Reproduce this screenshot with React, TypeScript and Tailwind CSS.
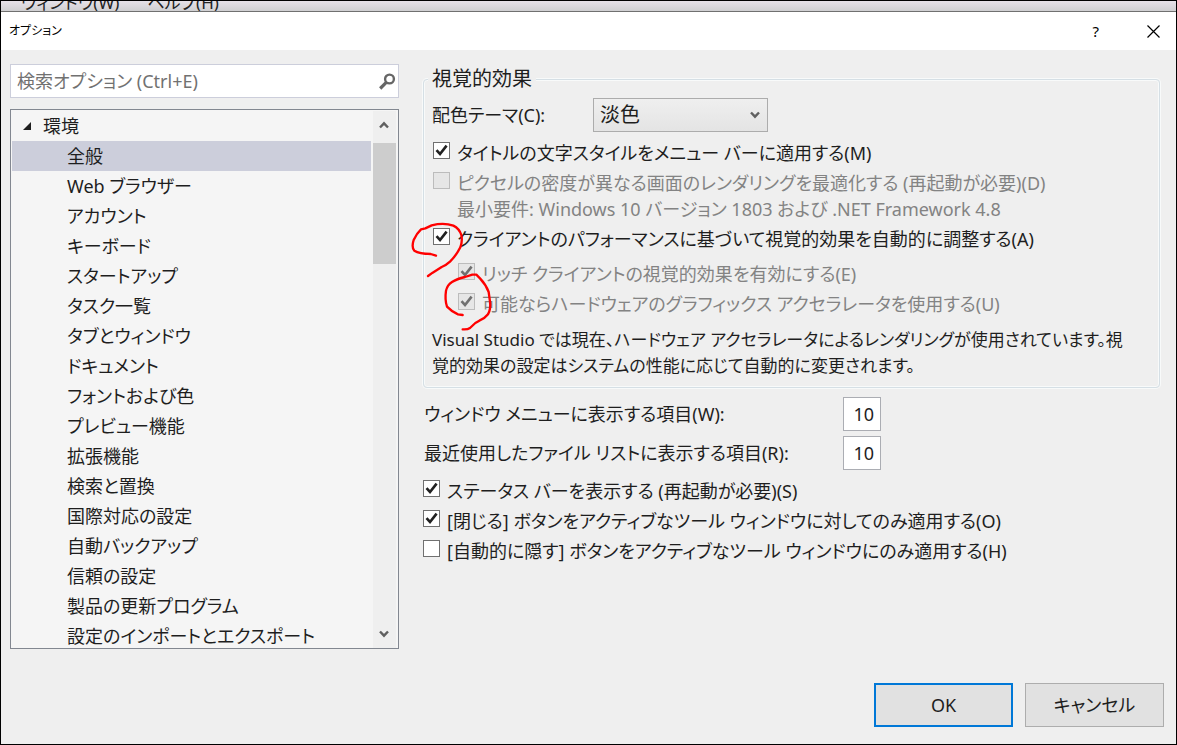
import { useState } from 'react';
import type { ReactNode } from 'react';

const categories = [
  '全般',
  'Web ブラウザー',
  'アカウント',
  'キーボード',
  'スタートアップ',
  'タスク一覧',
  'タブとウィンドウ',
  'ドキュメント',
  'フォントおよび色',
  'プレビュー機能',
  '拡張機能',
  '検索と置換',
  '国際対応の設定',
  '自動バックアップ',
  '信頼の設定',
  '製品の更新プログラム',
  '設定のインポートとエクスポート',
];

type CheckProps = { id: string; checked?: boolean; disabled?: boolean; children: ReactNode };

function CheckRow({ id, checked = false, disabled = false, children }: CheckProps) {
  const [on, setOn] = useState(checked);
  return (
    <div className="flex items-start gap-[7px]">
      <span className="mt-1 grid shrink-0">
        <input
          id={id}
          type="checkbox"
          checked={on}
          disabled={disabled}
          onChange={(e) => setOn(e.target.checked)}
          className="col-start-1 row-start-1 size-[17px] appearance-none border border-[#707070] bg-white disabled:border-[#bcbcbc] disabled:bg-[#e6e6e6]"
        />
        {on && (
          <svg
            viewBox="0 0 17 17"
            className={`pointer-events-none col-start-1 row-start-1 size-[17px] fill-none stroke-[2.6] ${disabled ? 'stroke-[#707070]' : 'stroke-[#212121]'}`}
          >
            <path d="M3.5 8.2 7 12 13.6 3.6" />
          </svg>
        )}
      </span>
      <label htmlFor={id} className={`leading-[30px] whitespace-nowrap ${disabled ? 'text-[#838383]' : ''}`}>
        {children}
      </label>
    </div>
  );
}

function NumberRow({ id, label }: { id: string; label: string }) {
  return (
    <div className="flex items-center">
      <label htmlFor={id} className="w-[420px] pl-px">
        {label}
      </label>
      <input
        id={id}
        type="text"
        defaultValue="10"
        className="h-[34px] w-[38px] border border-[#abadb3] bg-white pr-1.5 text-right"
      />
    </div>
  );
}

function Chevron({ up = false }: { up?: boolean }) {
  return (
    <svg viewBox="0 0 10 8" className="h-2 w-2.5 fill-none stroke-[#606060] stroke-[2.4]">
      <path d={up ? 'M1 6.5 5 2.3 9 6.5' : 'M1 1.5 5 5.7 9 1.5'} />
    </svg>
  );
}

export default function App() {
  const [selected, setSelected] = useState('全般');

  return (
    <div className="relative flex min-h-screen flex-col overflow-hidden border border-black bg-[#efefef] font-['Noto_Sans','Noto_Sans_CJK_JP',sans-serif] text-[18px] text-[#1e1e1e] [font-feature-settings:'palt']">
      <div className="flex h-[11px] items-end gap-7 overflow-hidden border-b border-[#707070] bg-linear-to-b from-[#e6e1e8] to-[#cfcfd1] pl-5 text-[17px] leading-4 text-[#222]">
        <span>ウィンドウ(W)</span>
        <span>ヘルプ(H)</span>
      </div>

      <header className="flex h-[38px] items-center bg-white pr-4 pl-2 text-black">
        <h1 className="flex-1 text-[12px]">オプション</h1>
        <button type="button" aria-label="ヘルプ" className="mr-12 text-[15px] leading-5">
          ?
        </button>
        <button type="button" aria-label="閉じる">
          <svg viewBox="0 0 13 13" className="size-[13px] fill-none stroke-black stroke-[1.2]">
            <path d="M.5.5l12 12M12.5.5l-12 12" />
          </svg>
        </button>
      </header>

      <main className="flex flex-1 items-start gap-[23px] pr-4 pl-[9px]">
        <div className="w-[389px] shrink-0 pt-[14px]">
          <div className="flex h-[34px] items-center border border-[#cccedb] bg-white pr-0.5 pl-1.5">
            <input
              type="search"
              aria-label="検索オプション"
              placeholder="検索オプション (Ctrl+E)"
              className="min-w-0 flex-1 outline-none placeholder:text-[#717171]"
            />
            <svg viewBox="0 0 17 17" className="size-[17px] fill-none stroke-[#666]">
              <circle cx="10.5" cy="6" r="4.4" strokeWidth="2.4" />
              <path d="M7.3 9.4 1.2 15.5" strokeWidth="3.2" />
            </svg>
          </div>

          <nav
            aria-label="カテゴリ"
            className="mt-[11px] flex h-[540px] overflow-hidden border border-[#828790] bg-[#f5f5f5] pt-px pr-0.5 pl-px"
          >
            <div className="flex-1">
              <button type="button" className="flex h-[30px] w-full items-center pl-[11px] text-left">
                <svg viewBox="0 0 8 8" className="mr-3 size-2 fill-[#1e1e1e]">
                  <path d="M8 0v8H0z" />
                </svg>
                環境
              </button>
              <ul>
                {categories.map((name) => (
                  <li key={name}>
                    <button
                      type="button"
                      onClick={() => setSelected(name)}
                      className={`block h-[30px] w-full pl-[55px] text-left leading-[30px] ${name === selected ? 'bg-[#cccedb]' : ''}`}
                    >
                      {name}
                    </button>
                  </li>
                ))}
              </ul>
            </div>
            <div className="ml-0.5 flex w-[23px] flex-col items-center bg-[#efefef]">
              <button type="button" aria-label="上へスクロール" className="grid h-8 w-full shrink-0 place-items-center pr-0.5 pb-1">
                <Chevron up />
              </button>
              <div className="h-[121px] w-full bg-[#cdcdcd]" />
              <div className="flex-1" />
              <button type="button" aria-label="下へスクロール" className="grid h-8 w-full shrink-0 place-items-center pt-1 pr-0.5">
                <Chevron />
              </button>
            </div>
          </nav>
        </div>

        <form className="min-w-0 flex-1 pt-[17px] pl-px" onSubmit={(e) => e.preventDefault()}>
          <fieldset className="rounded-[4px] border border-[#d5dfe5] px-2 pb-2 shadow-[0_0_0_1px_#f8fafa,inset_0_0_0_1px_#f8fafa]">
            <legend className="-ml-1 bg-[#efefef] px-1 text-[20px] leading-6">視覚的効果</legend>
            <div className="mt-[7px] mb-1.5 flex items-center">
              <label htmlFor="theme" className="w-[161px]">
                配色テーマ(C):
              </label>
              <span className="grid items-center">
                <select
                  id="theme"
                  className="col-start-1 row-start-1 h-[34px] w-[175px] appearance-none border border-[#acacac] bg-linear-to-b from-[#efefef] to-[#e4e4e4] pl-1.5 text-[20px]"
                >
                  <option>淡色</option>
                </select>
                <span className="pointer-events-none col-start-1 row-start-1 mr-2 justify-self-end">
                  <Chevron />
                </span>
              </span>
            </div>
            <div className="pl-px">
              <CheckRow id="title-style" checked>
                タイトルの文字スタイルをメニュー バーに適用する(M)
              </CheckRow>
              <CheckRow id="pixel-density" disabled>
                ピクセルの密度が異なる画面のレンダリングを最適化する (再起動が必要)(D)
              </CheckRow>
              <p className="mb-1 pl-6 leading-[22px] text-[#838383]">
                最小要件: Windows 10 バージョン 1803 および .NET Framework 4.8
              </p>
              <CheckRow id="auto-adjust" checked>
                クライアントのパフォーマンスに基づいて視覚的効果を自動的に調整する(A)
              </CheckRow>
              <div className="mt-[5px] pl-[25px]">
                <CheckRow id="rich-client" checked disabled>
                  リッチ クライアントの視覚的効果を有効にする(E)
                </CheckRow>
                <CheckRow id="hardware" checked disabled>
                  可能ならハードウェアのグラフィックス アクセラレータを使用する(U)
                </CheckRow>
              </div>
            </div>
            <p className="mt-2 text-[17px] leading-[26px]">
              Visual Studio では現在、ハードウェア アクセラレータによるレンダリングが使用されています。視
              <br />
              覚的効果の設定はシステムの性能に応じて自動的に変更されます。
            </p>
          </fieldset>

          <div className="mt-[9px] space-y-[5px]">
            <NumberRow id="window-items" label="ウィンドウ メニューに表示する項目(W):" />
            <NumberRow id="recent-items" label="最近使用したファイル リストに表示する項目(R):" />
          </div>
          <div className="mt-1.5">
            <CheckRow id="status-bar" checked>
              ステータス バーを表示する (再起動が必要)(S)
            </CheckRow>
            <CheckRow id="close-button" checked>
              [閉じる] ボタンをアクティブなツール ウィンドウに対してのみ適用する(O)
            </CheckRow>
            <CheckRow id="auto-hide">[自動的に隠す] ボタンをアクティブなツール ウィンドウにのみ適用する(H)</CheckRow>
          </div>
        </form>
      </main>

      <footer className="flex justify-end gap-3 pr-3 pb-[17px]">
        <button type="button" className="h-11 w-[139px] border-2 border-[#0078d7] bg-[#e1e1e1]">
          OK
        </button>
        <button type="button" className="h-11 w-[139px] border border-[#adadad] bg-[#e1e1e1]">
          キャンセル
        </button>
      </footer>

      <svg
        viewBox="30 480 270 345"
        aria-hidden="true"
        className="pointer-events-none absolute top-[219px] left-[409px] h-[115px] w-[90px] fill-none stroke-[#f00] stroke-[7]"
        strokeLinecap="round"
        strokeLinejoin="round"
      >
        <path d="M108 587 92 582Q58 581 43 572 34 562 41 540 50 520 63 508L76 505 95 496Q132 487 160 497 178 506 184 525 188 543 181 562 169 586 150 605 138 616 125 621L98 638 84 648" />
        <path d="M188 765 174 763Q156 756 141 740 134 720 138 692 142 675 156 666 170 657 195 651L217 644H229L240 655Q258 674 266 696L270 725Q273 748 264 763 254 776 238 782L226 789 210 804Q203 809 188 808" />
      </svg>
    </div>
  );
}
